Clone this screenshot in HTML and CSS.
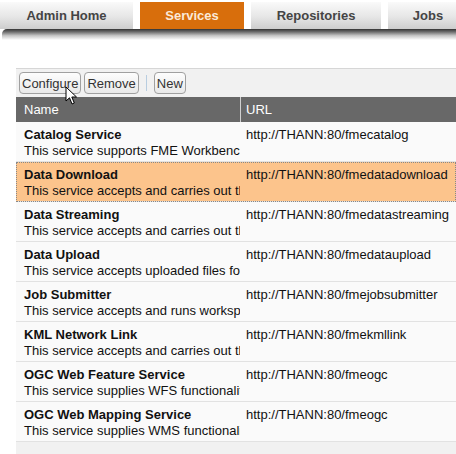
FILE: index.html
```html
<!DOCTYPE html>
<html lang="en">
<head>
<meta charset="UTF-8">
<title>FME Server - Services</title>
<link rel="stylesheet" href="styles.css">
</head>
<body>

<div class="tabs">
    <div class="tab tab-admin">Admin Home</div>
    <div class="tab tab-services active">Services</div>
    <div class="tab tab-repos">Repositories</div>
    <div class="tab tab-jobs">Jobs</div>
</div>
<div class="tabShadow"></div>

<div class="panel">
    <div class="toolbar">
        <button class="btn">Configure</button>
        <button class="btn">Remove</button>
        <span class="sep"></span>
        <button class="btn">New</button>
    </div>

    <div class="grid">
        <div class="gridHead">
            <div class="colName">Name</div>
            <div class="colUrl">URL</div>
        </div>

        <div class="row">
            <div class="colName"><b>Catalog Service</b><span>This service supports FME Workbench requests</span></div>
            <div class="colUrl">http://THANN:80/fmecatalog</div>
        </div>
        <div class="row selected">
            <div class="colName"><b>Data Download</b><span>This service accepts and carries out the request</span></div>
            <div class="colUrl">http://THANN:80/fmedatadownload</div>
        </div>
        <div class="row">
            <div class="colName"><b>Data Streaming</b><span>This service accepts and carries out the request</span></div>
            <div class="colUrl">http://THANN:80/fmedatastreaming</div>
        </div>
        <div class="row">
            <div class="colName"><b>Data Upload</b><span>This service accepts uploaded files for use</span></div>
            <div class="colUrl">http://THANN:80/fmedataupload</div>
        </div>
        <div class="row">
            <div class="colName"><b>Job Submitter</b><span>This service accepts and runs workspaces</span></div>
            <div class="colUrl">http://THANN:80/fmejobsubmitter</div>
        </div>
        <div class="row">
            <div class="colName"><b>KML Network Link</b><span>This service accepts and carries out the request</span></div>
            <div class="colUrl">http://THANN:80/fmekmllink</div>
        </div>
        <div class="row">
            <div class="colName"><b>OGC Web Feature Service</b><span>This service supplies WFS functionality</span></div>
            <div class="colUrl">http://THANN:80/fmeogc</div>
        </div>
        <div class="row">
            <div class="colName"><b>OGC Web Mapping Service</b><span>This service supplies WMS functionality</span></div>
            <div class="colUrl">http://THANN:80/fmeogc</div>
        </div>
    </div>
</div>

<!-- mouse pointer over the Configure button -->
<svg class="cursor" width="14" height="20" viewBox="0 0 14 20">
    <path d="M1 1 L1 15 L4.5 11.8 L7 18 L9.3 17 L6.8 11 L11.5 11 Z" fill="#fff" stroke="#000" stroke-width="1" stroke-linejoin="round"/>
</svg>

</body>
</html>
```

FILE: styles.css
```css
body {
    margin: 0;
    background-color: #fff;
    font-family: "Liberation Sans", Arial, sans-serif;
    width: 456px;
    height: 454px;
    overflow: hidden;
    position: relative;
}
.tabs {
    display: flex;
    gap: 7px;
    padding-top: 2px;
    height: 27px;
}
.tab {
    flex: none;
    height: 27px;
    line-height: 28px;
    text-align: center;
    font-weight: bold;
    font-size: 13px;
    color: #444;
    background: linear-gradient(#fafafa, #e6e6e6 55%, #cdcdcd);
}
.tab-admin { width: 133px; }
.tab-services { width: 104px; }
.tab-repos { width: 130px; }
.tab-jobs { width: 80px; }
.tab.active {
    background: #d86e0c;
    color: #fbe9d8;
}
.tabShadow {
    height: 11px;
    margin-left: 2px;
    border-top-left-radius: 5px;
    background: linear-gradient(#333, #6a6a6a 25%, #c4c4c4 60%, #fff);
}
.panel {
    margin: 28px 0 0 16px;
    background-color: #f1f1f1;
    border-top: 1px solid #d6d6d6;
    height: 400px;
}
.toolbar {
    display: flex;
    align-items: center;
    gap: 3px;
    height: 28px;
    padding-left: 3px;
}
.btn {
    height: 22px;
    padding: 0 2px;
    font-family: "Liberation Sans", Arial, sans-serif;
    font-size: 13px;
    color: #333;
    background: linear-gradient(#fdfdfd, #e9e9e9);
    border: 1px solid #a0a0a0;
    border-radius: 4px;
}
.sep {
    width: 1px;
    height: 16px;
    background-color: #b8cde0;
    margin: 0 4px;
}
.grid {
    font-size: 13px;
}
.gridHead {
    display: flex;
    height: 25px;
    line-height: 25px;
    background-color: #686868;
    color: #fff;
}
.colName {
    width: 216px;
    padding-left: 8px;
    overflow: hidden;
    white-space: nowrap;
    flex: none;
}
.colUrl {
    padding-left: 6px;
    white-space: nowrap;
    flex: 1;
}
.gridHead .colUrl {
    border-left: 1px solid #d0d0d0;
    padding-left: 5px;
}
.row {
    display: flex;
    height: 40px;
    padding-top: 5px;
    box-sizing: border-box;
    border-bottom: 1px solid #e2e2e2;
    background-color: #fafafa;
    color: #111;
    line-height: 16px;
}
.row .colName b,
.row .colName span {
    display: block;
}
.row.selected {
    background-color: #fcc48c;
    outline: 1px dotted #888;
    outline-offset: -1px;
}
.cursor {
    position: absolute;
    left: 65px;
    top: 86px;
}
```
